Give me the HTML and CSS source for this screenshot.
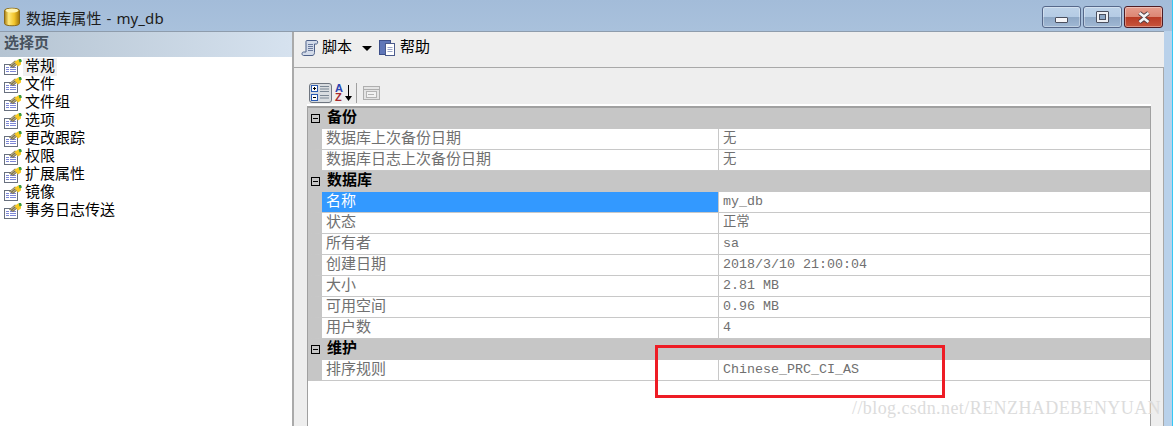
FILE: index.html
```html
<!DOCTYPE html>
<html lang="zh">
<head>
<meta charset="utf-8">
<title>数据库属性 - my_db</title>
<link rel="stylesheet" href="styles.css">
</head>
<body>
<svg class="defs" width="0" height="0">
  <defs>
    <linearGradient id="can" x1="0" x2="1" y1="0" y2="0">
      <stop offset="0" stop-color="#a87c10"/><stop offset=".28" stop-color="#ffe97a"/><stop offset=".65" stop-color="#f2c52c"/><stop offset="1" stop-color="#a07408"/>
    </linearGradient>
    <symbol id="page" viewBox="0 0 18 16">
      <rect x="0.500" y="5.500" width="13" height="10" fill="#fff" stroke="#68707e"/>
      <path d="M2 8.500h3M6 8.500h6M2 10.500h3M6 10.500h6M2 12.500h3M6 12.500h6" stroke="#7c86d6"/>
      <path d="M5 6.500l6-5 4 2.500-6 5z" fill="#7d7350"/>
      <path d="M6.500 6.500l5-4M8.500 7.500l5-4" stroke="#d6cfb0" stroke-width=".8"/>
      <path d="M10.500 3l3.500-2.500 3 1.500v3.500L14 7.500z" fill="#f8cb22"/>
      <path d="M14.500 0h2.500l1 2.500-2.500 1z" fill="#3f9a3c"/>
    </symbol>
  </defs>
</svg>
<div class="window">
  <header class="titlebar">
    <svg class="db-icon" width="16" height="20" viewBox="0 0 16 20">
      <path d="M.5 3.500C.5 .500 15.500 .500 15.500 3.500v13C15.500 19.500 .5 19.500 .5 16.500z" fill="url(#can)" stroke="#8a6a18"/>
      <ellipse cx="8" cy="3.500" rx="6.500" ry="2" fill="#fff3b0"/>
    </svg>
    <span class="title">数据库属性 - my_db</span>
    <div class="winbtns">
      <div class="winbtn"><i class="glyph-min"></i></div>
      <div class="winbtn"><i class="glyph-max"></i></div>
      <div class="winbtn winbtn-close">
        <svg width="14" height="13" viewBox="0 0 14 13"><path d="M2.500 2l4.500 3.500L11.500 2M2.500 11l4.500-3.500L11.500 11" fill="none" stroke="#4a3a40" stroke-width="4.200"/><path d="M2.500 2l4.500 3.500L11.500 2M2.500 11l4.500-3.500L11.500 11" fill="none" stroke="#f4f4f6" stroke-width="2.600"/></svg>
      </div>
    </div>
  </header>
  <div class="body">
    <aside class="sidebar">
      <div class="side-head">选择页</div>
      <ul class="pages">
        <li class="page"><svg class="page-icon"><use href="#page"/></svg><span class="page-label is-current">常规</span></li>
        <li class="page"><svg class="page-icon"><use href="#page"/></svg><span class="page-label">文件</span></li>
        <li class="page"><svg class="page-icon"><use href="#page"/></svg><span class="page-label">文件组</span></li>
        <li class="page"><svg class="page-icon"><use href="#page"/></svg><span class="page-label">选项</span></li>
        <li class="page"><svg class="page-icon"><use href="#page"/></svg><span class="page-label">更改跟踪</span></li>
        <li class="page"><svg class="page-icon"><use href="#page"/></svg><span class="page-label">权限</span></li>
        <li class="page"><svg class="page-icon"><use href="#page"/></svg><span class="page-label">扩展属性</span></li>
        <li class="page"><svg class="page-icon"><use href="#page"/></svg><span class="page-label">镜像</span></li>
        <li class="page"><svg class="page-icon"><use href="#page"/></svg><span class="page-label">事务日志传送</span></li>
      </ul>
    </aside>
    <main class="content">
      <div class="toolbar">
        <svg class="tool-icon" width="18" height="18" viewBox="0 0 18 18">
          <path d="M6 1.500h9.500c1.500 0 1.500 3.500 0 3.500H13.500v8.500c0 2-1 3-2.500 3H2.500c-2 0-2-3.500 0-3.500H5V5C5 3.500 4.500 1.500 6 1.500z" fill="#d3dbe9" stroke="#4d6088"/>
          <path d="M7 5.500h5M7 7.500h5M7 9.500h5M7 11.500h5" stroke="#6a7a9e"/>
        </svg>
        <span class="tool-label">脚本</span>
        <i class="caret"></i>
        <svg class="tool-icon help-icon" width="18" height="18" viewBox="0 0 18 18">
          <rect x=".5" y="1.500" width="11" height="14" fill="#5f76b8" stroke="#3d4f8a"/>
          <rect x="6.500" y="4.500" width="9" height="12" fill="#fff" stroke="#4a5a8c"/>
          <path d="M8.500 8.500h5M8.500 10.500h5M8.500 12.500h5" stroke="#9aa5c8"/>
        </svg>
        <span class="tool-label">帮助</span>
      </div>
      <div class="panel">
        <div class="grid-tools">
          <div class="tbtn">
            <svg width="21" height="18" viewBox="0 0 21 18">
              <rect x="1.500" y="1.500" width="6" height="6" fill="#fff" stroke="#2b5ab0"/>
              <path d="M3 4.500h3M4.500 3v3" stroke="#000"/>
              <rect x="1.500" y="10.500" width="6" height="6" fill="#fff" stroke="#2b5ab0"/>
              <path d="M3 13.500h3" stroke="#000"/>
              <path d="M10 2.500h9M10 5h9M10 7.500h9M10 11.500h9M10 14h9" stroke="#7b8794"/>
            </svg>
          </div>
          <div class="az">
            <span class="az-a">A</span><span class="az-z">Z</span>
            <svg class="az-arrow" width="7" height="17" viewBox="0 0 7 17"><path d="M3.500 0v13" stroke="#000"/><path d="M0 11h7l-3.500 5z" fill="#000"/></svg>
          </div>
          <i class="tsep"></i>
          <svg width="17" height="14" viewBox="0 0 17 14">
            <rect x=".5" y=".5" width="16" height="13" fill="#e4e4e4" stroke="#aeaeae"/>
            <path d="M.5 3.500h16" stroke="#aeaeae"/>
            <rect x="3.500" y="5.500" width="10" height="6" fill="#f2f2f2" stroke="#b4b4b4"/>
            <path d="M5 8.500h6" stroke="#b4b4b4"/>
          </svg>
        </div>
        <div class="grid">
          <div class="cat"><i class="minus"></i><span class="cat-label">备份</span></div>
          <div class="row"><div class="k">数据库上次备份日期</div><div class="v">无</div></div>
          <div class="row"><div class="k">数据库日志上次备份日期</div><div class="v">无</div></div>
          <div class="cat"><i class="minus"></i><span class="cat-label">数据库</span></div>
          <div class="row is-selected"><div class="k">名称</div><div class="v">my_db</div></div>
          <div class="row"><div class="k">状态</div><div class="v">正常</div></div>
          <div class="row"><div class="k">所有者</div><div class="v">sa</div></div>
          <div class="row"><div class="k">创建日期</div><div class="v">2018/3/10 21:00:04</div></div>
          <div class="row"><div class="k">大小</div><div class="v">2.81 MB</div></div>
          <div class="row"><div class="k">可用空间</div><div class="v">0.96 MB</div></div>
          <div class="row"><div class="k">用户数</div><div class="v">4</div></div>
          <div class="cat"><i class="minus"></i><span class="cat-label">维护</span></div>
          <div class="row"><div class="k">排序规则</div><div class="v">Chinese_PRC_CI_AS</div></div>
        </div>
      </div>
    </main>
  </div>
  <div class="redbox"></div>
  <div class="watermark">//blog.csdn.net/RENZHADEBENYUAN</div>
</div>
</body>
</html>
```

FILE: styles.css
```css
* { box-sizing: border-box; }
html, body { margin: 0; height: 100%; overflow: hidden; }
body { font-family: "Noto Sans CJK SC", "Noto Sans", sans-serif; font-size: 15px; color: #000; }
.defs { position: absolute; }
.window {
  position: relative;
  display: flex;
  flex-direction: column;
  width: 1173px;
  height: 426px;
  overflow: hidden;
  background: #b9d1ea;
  border-right: 1px solid #35c8f5;
}

.titlebar {
  display: flex;
  align-items: center;
  flex: 0 0 31px;
  padding-left: 4px;
  background: linear-gradient(#a3bcd9, #a9c1dc);
}
.db-icon { margin-right: 6px; margin-top: 3px; }
.title { font-family: "Noto Sans", "Noto Sans CJK SC", sans-serif; font-size: 15px; line-height: 20px; word-spacing: 1px; letter-spacing: 0.1px; color: #1c1c1c; margin-top: 4px; }
.winbtns { display: flex; gap: 2px; margin-left: auto; margin-right: 9px; margin-top: 3px; }
.winbtn {
  display: flex; align-items: center; justify-content: center;
  width: 39px; height: 22px;
  border: 1px solid #56688a;
  border-radius: 3px;
  background: linear-gradient(#bdd2e8 0, #b4cbe4 50%, #8ea8c6 50%, #a0b8d4 100%);
  box-shadow: inset 0 0 0 1px rgba(255,255,255,.35);
}
.winbtn-close {
  border-color: #4e1c24;
  background: linear-gradient(#e59d8e 0, #dc8673 50%, #b83a24 50%, #c8553c 100%);
}
.glyph-min { width: 13px; height: 6px; margin-top: 5px; background: #f5f5f8; border: 1px solid #4a4f5e; border-radius: 1px; }
.glyph-max { width: 13px; height: 12px; background: #eef0f4; border: 1px solid #4a4f5e; border-radius: 1px; position: relative; display: flex; align-items: center; justify-content: center; }
.glyph-max::after { content: ""; width: 5px; height: 4px; background: #8ea8c6; border: 1px solid #4a4f5e; }

.body { display: flex; flex: 1; min-height: 0; margin-right: 8px; background: #eee; border-top: 1px solid #8e9cac; }

.sidebar { flex: 0 0 294px; background: #fff; border-right: 2px solid #aaaaaa; }
.side-head {
  height: 25px; line-height: 19px; padding-left: 4px;
  font-size: 15px; font-weight: 700; color: #47525e;
  background: linear-gradient(90deg, #b5c4d2, #d6e2ef);
}
.pages { list-style: none; margin: 0; padding: 1px 0 0; }
.page { display: flex; align-items: center; height: 18px; padding-left: 4px; }
.page-icon { width: 18px; height: 16px; margin-right: 1px; flex: none; }
.page-label { display: block; height: 18px; line-height: 14px; padding: 0 2px 4px 2px; white-space: nowrap; }
.is-current { background: #f0f0f0; }

.content { flex: 1; min-width: 0; display: flex; flex-direction: column; }
.toolbar { display: flex; align-items: flex-start; flex: 0 0 35px; padding: 7px 0 0 7px; background: #eee; }
.tool-icon { flex: none; }
.tool-label { display: block; height: 18px; line-height: 14px; margin-left: 3px; }
.caret { width: 0; height: 0; margin: 7px 7px 0 10px; border: 5px solid transparent; border-top: 5px solid #000; border-bottom: 0; }
.help-icon { margin-left: 0; }

.panel { flex: 1; min-height: 0; display: flex; flex-direction: column; border-top: 1px solid #a8a8a8; border-right: 1px solid #a8a8a8; background: #eee; padding-left: 13px; padding-right: 12px; }
.grid-tools { display: flex; align-items: center; flex: 0 0 38px; padding: 14px 0 0 2px; border-bottom: 2px solid #fff; }
.tbtn { display: flex; align-items: center; justify-content: center; width: 23px; height: 20px; border: 1px solid #6f7680; border-radius: 3px; background: #d9dde1; }
.az { position: relative; width: 18px; height: 20px; margin-left: 3px; font-family: "Liberation Sans", sans-serif; font-size: 11px; font-weight: 700; line-height: 9px; }
.az-a { position: absolute; left: 0; top: 1px; color: #2a44b0; }
.az-z { position: absolute; left: 0; top: 10px; color: #a8282c; }
.az-arrow { position: absolute; left: 10px; top: 2px; }
.tsep { width: 1px; height: 20px; margin: 0 6px 0 3px; background: #a0a0a0; }

.grid { flex: 1; min-height: 0; background: #fff; border-top: 2px solid #a0a0a0; border-left: 1px solid #a0a0a0; border-right: 1px solid #a0a0a0; }
.cat { display: flex; align-items: flex-start; height: 21px; background: #c6c6c6; font-weight: 700; }
.cat-label { display: block; height: 21px; line-height: 15px; }
.minus { position: relative; flex: none; width: 9px; height: 9px; margin: 6px 7px 0 3px; border: 1px solid #000; }
.minus::after { content: ""; position: absolute; left: 1px; right: 1px; top: 3px; height: 1px; background: #000; }
.row { display: flex; height: 21px; border-left: 14px solid #c6c6c6; border-bottom: 1px solid #c8c8c8; }
.k { flex: 0 0 397px; padding-left: 4px; line-height: 15px; color: #707070; border-right: 1px solid #c8c8c8; white-space: nowrap; }
.v { flex: 1; padding-left: 4px; line-height: 19px; color: #707070; white-space: nowrap; font-family: "Liberation Mono", "Noto Sans CJK SC", monospace; font-size: 13.33px; }
.is-selected .k { background: #3399ff; color: #fff; }

.redbox { position: absolute; left: 655px; top: 345px; width: 290px; height: 53px; border: 3px solid #ee1c25; }
.watermark { position: absolute; left: 852px; top: 397px; font-family: "Liberation Serif", serif; font-size: 18px; letter-spacing: 0.42px; line-height: 22px; color: #dcdcdc; white-space: nowrap; }
```
